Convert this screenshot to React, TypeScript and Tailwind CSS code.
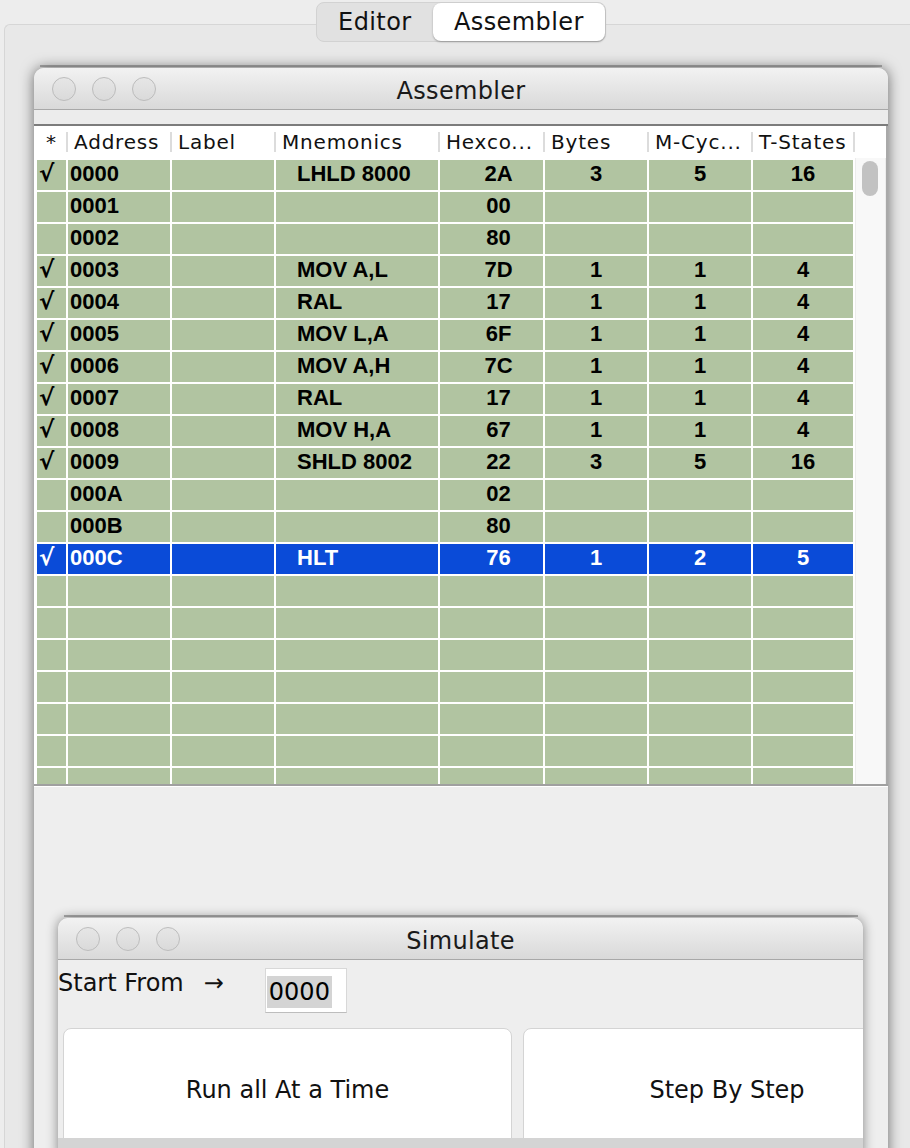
import React from 'react';

type Row = {
  done: boolean;
  addr: string;
  mnem: string;
  hex: string;
  bytes: string;
  mcyc: string;
  tstates: string;
};

const rows: Row[] = [
  { done: true, addr: '0000', mnem: 'LHLD 8000', hex: '2A', bytes: '3', mcyc: '5', tstates: '16' },
  { done: false, addr: '0001', mnem: '', hex: '00', bytes: '', mcyc: '', tstates: '' },
  { done: false, addr: '0002', mnem: '', hex: '80', bytes: '', mcyc: '', tstates: '' },
  { done: true, addr: '0003', mnem: 'MOV A,L', hex: '7D', bytes: '1', mcyc: '1', tstates: '4' },
  { done: true, addr: '0004', mnem: 'RAL', hex: '17', bytes: '1', mcyc: '1', tstates: '4' },
  { done: true, addr: '0005', mnem: 'MOV L,A', hex: '6F', bytes: '1', mcyc: '1', tstates: '4' },
  { done: true, addr: '0006', mnem: 'MOV A,H', hex: '7C', bytes: '1', mcyc: '1', tstates: '4' },
  { done: true, addr: '0007', mnem: 'RAL', hex: '17', bytes: '1', mcyc: '1', tstates: '4' },
  { done: true, addr: '0008', mnem: 'MOV H,A', hex: '67', bytes: '1', mcyc: '1', tstates: '4' },
  { done: true, addr: '0009', mnem: 'SHLD 8002', hex: '22', bytes: '3', mcyc: '5', tstates: '16' },
  { done: false, addr: '000A', mnem: '', hex: '02', bytes: '', mcyc: '', tstates: '' },
  { done: false, addr: '000B', mnem: '', hex: '80', bytes: '', mcyc: '', tstates: '' },
  { done: true, addr: '000C', mnem: 'HLT', hex: '76', bytes: '1', mcyc: '2', tstates: '5' },
];

const emptyRows = 7;

const headers = ['Address', 'Label', 'Mnemonics', 'Hexco...', 'Bytes', 'M-Cyc...', 'T-States'];
const headerWidths = ['w-[104px]', 'w-[104px]', 'w-[164px]', 'w-[105px]', 'w-[104px]', 'w-[104px]', 'w-[102px]'];

const gridCols = 'grid grid-cols-[29px_102px_102px_162px_103px_102px_102px_100px] gap-x-[2px]';

const Lights = () => (
  <div className="flex items-center gap-[16px] pl-[18px]">
    {[0, 1, 2].map((i) => (
      <div
        key={i}
        className="w-[24px] h-[24px] rounded-full border border-[#bcbcbc] bg-gradient-to-b from-[#e6e6e6] to-[#dadada]"
      />
    ))}
  </div>
);

const TitleBar = ({ title }: { title: string }) => (
  <div className="grid grid-cols-[1fr_auto_1fr] items-center h-[42px] rounded-t-[10px] border-b border-[#a8a8a8] bg-gradient-to-b from-[#f2f2f2] to-[#d9d9d9]">
    <Lights />
    <div className="pt-[5px] text-[24px] leading-[28px] tracking-[0.3px] text-[#1a1a1a]">{title}</div>
    <div />
  </div>
);

const App: React.FC = () => {
  return (
    <div className="w-[910px] h-[1148px] overflow-hidden bg-[#ededed] font-['DejaVu_Sans',sans-serif] text-black">
      {/* tabs */}
      <div className="relative z-10 pt-[2px] pl-[316px]">
        <div className="flex w-[290px] h-[40px] rounded-[8px] border border-[#d2d2d2] bg-[#e1e1e1]">
          <div className="w-[116px] flex items-center justify-center text-[24px] tracking-[0.4px] text-[#111]">
            Editor
          </div>
          <div className="w-[173px] flex items-center justify-center rounded-[8px] bg-white shadow-[0_1px_2px_rgba(0,0,0,0.3)] text-[24px] tracking-[0.4px] text-[#111]">
            Assembler
          </div>
        </div>
      </div>

      {/* tabbed panel */}
      <div className="-mt-[18px] ml-[4px] h-[1130px] rounded-tl-[6px] border-t border-l border-[#d6d6d6] bg-[#e8e8e8]">
        <div className="mt-[40px] ml-[35px] w-[842px] h-[2px] bg-[#acacac]" />

        {/* Assembler window */}
        <div className="mt-[1px] ml-[29px] w-[854px] h-[1100px] rounded-t-[10px] bg-[#eeeeee] shadow-[0_0_14px_rgba(0,0,0,0.55)] flex flex-col">
          <TitleBar title="Assembler" />
          <div className="h-[14px] bg-[#ececec]" />
          <div className="h-[2px] bg-[#7c7c7c]" />

          {/* table */}
          <div className="flex bg-white border-r-2 border-[#a9a9a9]">
            <div className="pl-[3px] w-[821px]">
              {/* header */}
              <div className="flex h-[32px] text-[20px] tracking-[0.8px] text-[#111]">
                <div className="w-[31px] flex items-center">
                  <div className="flex-1 text-center">*</div>
                  <div className="w-[2px] h-[20px] bg-[#dcdcdc]" />
                </div>
                {headers.map((h, i) => (
                  <div key={h} className={`${headerWidths[i]} flex items-center`}>
                    <div className="flex-1 pl-[6px] whitespace-nowrap overflow-hidden">{h}</div>
                    <div className="w-[2px] h-[20px] bg-[#dcdcdc]" />
                  </div>
                ))}
              </div>
              {/* body */}
              <div className="h-[626px] overflow-hidden pt-[2px] font-['Liberation_Sans',sans-serif] font-bold text-[22px]">
                {rows.map((r, i) => {
                  const sel = i === rows.length - 1;
                  const cell = `h-[30px] flex items-center pb-[3px] ${sel ? 'bg-[#0a4bd8] text-white' : 'bg-[#b1c4a1] text-black'}`;
                  return (
                    <div key={r.addr} className={`${gridCols} mb-[2px]`}>
                      <div className={`${cell} pl-[2px] font-['DejaVu_Sans',sans-serif] text-[23px]`}>{r.done ? '√' : ''}</div>
                      <div className={`${cell} pl-[2px]`}>{r.addr}</div>
                      <div className={cell} />
                      <div className={`${cell} pl-[21px]`}>{r.mnem}</div>
                      <div className={`${cell} justify-center pl-[14px]`}>{r.hex}</div>
                      <div className={`${cell} justify-center`}>{r.bytes}</div>
                      <div className={`${cell} justify-center`}>{r.mcyc}</div>
                      <div className={`${cell} justify-center`}>{r.tstates}</div>
                    </div>
                  );
                })}
                {Array.from({ length: emptyRows }).map((_, i) => (
                  <div key={`e${i}`} className={`${gridCols} mb-[2px]`}>
                    {Array.from({ length: 8 }).map((__, j) => (
                      <div key={j} className="h-[30px] bg-[#b1c4a1]" />
                    ))}
                  </div>
                ))}
              </div>
            </div>
            {/* scrollbar */}
            <div className="w-[31px] flex flex-col">
              <div className="h-[32px]" />
              <div className="flex-1 bg-[#f8f8f8] border-l border-r border-[#ececec] pt-[3px] pl-[6px]">
                <div className="w-[16px] h-[35px] rounded-full bg-[#c2c2c2]" />
              </div>
            </div>
          </div>
          <div className="h-[2px] bg-[#a0a0a0]" />
          <div className="h-[1px] bg-white" />

          {/* desktop area */}
          <div className="flex-1 bg-[#eeeeee]">
            <div className="mt-[128px] ml-[30px] w-[794px] h-[2px] bg-[#acacac]" />
            {/* Simulate window */}
            <div className="mt-[1px] ml-[24px] w-[805px] rounded-t-[10px] bg-[#eeeeee] shadow-[0_0_12px_rgba(0,0,0,0.45)] overflow-hidden">
              <TitleBar title="Simulate" />
              <div className="flex items-start pt-[9px] h-[68px] text-[24px] leading-[28px] text-[#111]">
                <div>Start From</div>
                <div className="ml-[20px]">→</div>
                <div className="ml-[41px] -mt-[1px] w-[82px] h-[45px] bg-white border border-[#d8d8d8] border-b-[#bdbdbd] flex items-center pl-[1px] pt-[2px]">
                  <span className="bg-[#d4d4d4] px-[2px] leading-[32px] text-black">0000</span>
                </div>
              </div>
              <div className="flex h-[110px] overflow-hidden text-[24px] text-[#111]">
                <div className="ml-[5px] w-[449px] h-[124px] shrink-0 rounded-[8px] bg-white border border-[#d4d4d4] flex items-center justify-center">
                  Run all At a Time
                </div>
                <div className="ml-[11px] w-[408px] h-[124px] shrink-0 rounded-[8px] bg-white border border-[#d4d4d4] flex items-center justify-center">
                  Step By Step
                </div>
              </div>
              <div className="h-[20px] bg-[#d4d4d4]" />
            </div>
          </div>
        </div>
      </div>
    </div>
  );
};

export default App;
